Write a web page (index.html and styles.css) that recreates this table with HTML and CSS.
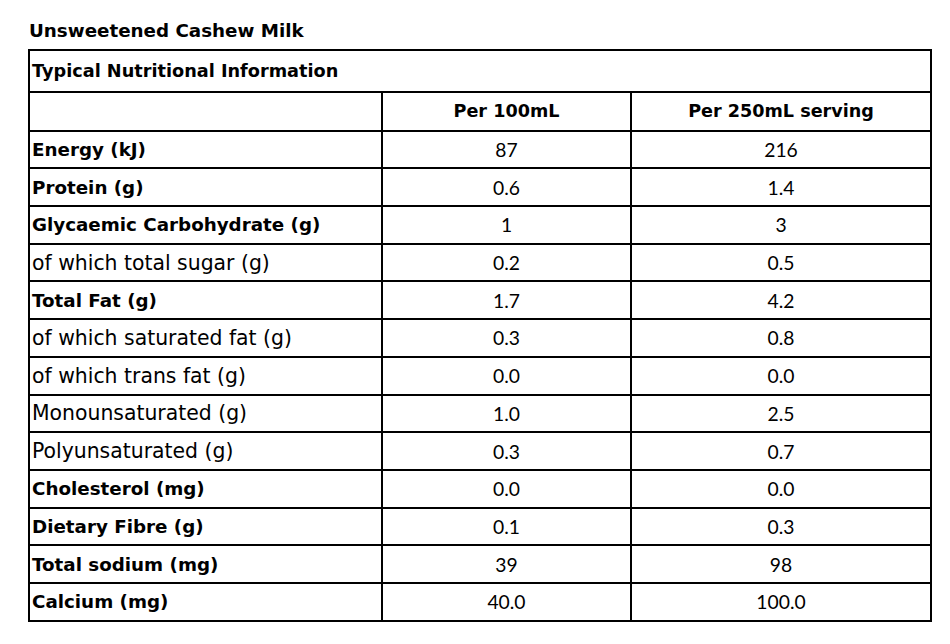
FILE: index.html
```html
<!DOCTYPE html>
<html>
<head>
<meta charset="utf-8">
<link rel="stylesheet" href="styles.css">
</head>
<body>
<div class="page">
  <h1 class="title">Unsweetened Cashew Milk</h1>
  <table class="nutri">
    <colgroup>
      <col class="c1"><col class="c2"><col class="c3">
    </colgroup>
    <tr class="caption-row"><td colspan="3" class="lbl cap">Typical Nutritional Information</td></tr>
    <tr class="head-row"><td class="lbl"></td><td class="hd">Per 100mL</td><td class="hd">Per 250mL serving</td></tr>
    <tr><td class="lbl b">Energy (kJ)</td><td class="num">87</td><td class="num">216</td></tr>
    <tr><td class="lbl b">Protein (g)</td><td class="num">0.6</td><td class="num">1.4</td></tr>
    <tr><td class="lbl b">Glycaemic Carbohydrate (g)</td><td class="num">1</td><td class="num">3</td></tr>
    <tr><td class="lbl">of which total sugar (g)</td><td class="num">0.2</td><td class="num">0.5</td></tr>
    <tr><td class="lbl b">Total Fat (g)</td><td class="num">1.7</td><td class="num">4.2</td></tr>
    <tr><td class="lbl">of which saturated fat (g)</td><td class="num">0.3</td><td class="num">0.8</td></tr>
    <tr><td class="lbl">of which trans fat (g)</td><td class="num">0.0</td><td class="num">0.0</td></tr>
    <tr><td class="lbl">Monounsaturated (g)</td><td class="num">1.0</td><td class="num">2.5</td></tr>
    <tr><td class="lbl">Polyunsaturated (g)</td><td class="num">0.3</td><td class="num">0.7</td></tr>
    <tr><td class="lbl b">Cholesterol (mg)</td><td class="num">0.0</td><td class="num">0.0</td></tr>
    <tr><td class="lbl b">Dietary Fibre (g)</td><td class="num">0.1</td><td class="num">0.3</td></tr>
    <tr><td class="lbl b">Total sodium (mg)</td><td class="num">39</td><td class="num">98</td></tr>
    <tr><td class="lbl b">Calcium (mg)</td><td class="num">40.0</td><td class="num">100.0</td></tr>
  </table>
</div>
</body>
</html>
```

FILE: styles.css
```css
html, body {
  margin: 0;
  padding: 0;
  background: #fff;
  color: #000;
}
.page {
  padding: 0 0 0 28px;
}
.title {
  margin: 0 0 0 1px;
  padding: 20px 0 7px 0;
  font-family: "DejaVu Sans", sans-serif;
  font-weight: bold;
  font-size: 18.3px;
  line-height: 22px;
}
.nutri {
  border-spacing: 0;
  border-top: 2px solid #000;
  border-left: 2px solid #000;
  table-layout: fixed;
  width: 904px;
}
.c1 { width: 353px; }
.c2 { width: 249px; }
.c3 { width: 300px; }
.nutri td {
  border-right: 2px solid #000;
  border-bottom: 2px solid #000;
  padding: 0;
  height: 35.73px;
  vertical-align: middle;
  white-space: nowrap;
}
.nutri .caption-row td { height: 40px; }
.nutri .head-row td { height: 36.5px; }
.nutri td.lbl {
  font-family: "DejaVu Sans", sans-serif;
  font-size: 20.4px;
  padding-left: 2px;
  font-weight: normal;
}
.nutri td.lbl.b {
  font-weight: bold;
  font-size: 18.3px;
}
.nutri td.lbl.cap {
  font-weight: bold;
  font-size: 17.7px;
}
.nutri td.hd {
  font-family: "DejaVu Sans", sans-serif;
  font-weight: bold;
  font-size: 17.6px;
  text-align: center;
}
.nutri td.num {
  font-family: Lato, sans-serif;
  font-size: 19.3px;
  text-align: center;
}
```
